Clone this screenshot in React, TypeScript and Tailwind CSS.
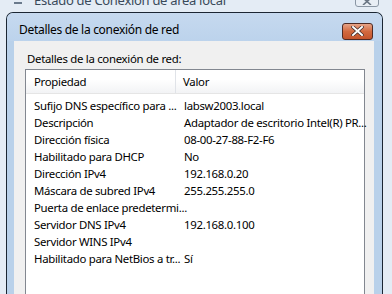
import React from "react";

const rows: [string, string][] = [
  ["Sufijo DNS específico para ...", "labsw2003.local"],
  ["Descripción", "Adaptador de escritorio Intel(R) PR..."],
  ["Dirección física", "08-00-27-88-F2-F6"],
  ["Habilitado para DHCP", "No"],
  ["Dirección IPv4", "192.168.0.20"],
  ["Máscara de subred IPv4", "255.255.255.0"],
  ["Puerta de enlace predetermi...", ""],
  ["Servidor DNS IPv4", "192.168.0.100"],
  ["Servidor WINS IPv4", ""],
  ["Habilitado para NetBios a tr...", "Sí"],
];

export default function App() {
  return (
    <div
      className="w-[392px] h-[294px] overflow-hidden flex flex-col bg-[#e4ecf5] text-[11.4px] tracking-[-0.3px] text-black"
      style={{ fontFamily: '"Noto Sans", "Liberation Sans", sans-serif' }}
    >
      {/* outer window title strip */}
      <div className="h-[12px] shrink-0 relative">
        <div className="absolute left-[14px] top-[-6px] w-[8px] h-[10px] border-b-2 border-[#6a7a8c]" />
        <div className="absolute left-[34px] top-[-7px] text-[#3a4a5a] text-[13px] leading-[15px] whitespace-nowrap">
          Estado de Conexión de área local
        </div>
        <div className="absolute left-[355px] top-[-10px] w-[24px] h-[17px] border border-[#8a96a4] rounded-[3px] bg-[#e8eef5] overflow-hidden flex justify-center">
          <svg width="10" height="14" viewBox="0 0 10 14">
            <path d="M1 7 L9 14 M9 7 L1 14" stroke="#6a7684" strokeWidth="1.6" />
          </svg>
        </div>
      </div>
      {/* dialog */}
      <div className="ml-[6px] w-[377px] flex-1 flex flex-col border border-b-0 border-[#1b2633] rounded-t-[7px] bg-[#b9d1ea]">
        <div className="h-[28px] shrink-0 flex items-center justify-between pl-[12px] pr-[9px] rounded-t-[6px] bg-gradient-to-b from-[#c6d9ef] to-[#bcd3ec]">
          <span className="text-[12px] leading-[15px] mt-[4px]">Detalles de la conexión de red</span>
          <div className="mt-[8px] w-[31px] h-[17px] rounded-[3px] border border-[#4f2a24] bg-gradient-to-b from-[#e6a387] via-[#d2693f] to-[#c4542c] flex items-center justify-center">
            <svg width="13" height="10" viewBox="0 0 13 10">
              <path d="M2 1 L11 9 M11 1 L2 9" stroke="#3b2a2a" strokeWidth="3.4" strokeLinecap="square" />
              <path d="M2 1 L11 9 M11 1 L2 9" stroke="#ffffff" strokeWidth="2" strokeLinecap="square" />
            </svg>
          </div>
        </div>
        <div className="ml-[7px] mr-[8px] flex-1 bg-[#f0f0f0] flex flex-col pl-[11px] pt-[10px]">
          <div className="pl-[2px] leading-[15px]">Detalles de la conexión de red:</div>
          <div className="mt-[3px] w-[340px] flex-1 border border-b-0 border-[#828790] bg-white flex flex-col">
            <div className="h-[23px] shrink-0 flex bg-gradient-to-b from-white from-40% to-[#f2f3f5]">
              <div className="w-[150px] shrink-0 pl-[8px] flex items-center border-r border-[#e0e3e8]">Propiedad</div>
              <div className="flex-1 pl-[7px] flex items-center">Valor</div>
            </div>
            <div className="h-px bg-[#e5e5e5]" />
            <div className="pt-[3px] flex flex-col">
              {rows.map(([k, v]) => (
                <div key={k} className="h-[17px] flex items-center">
                  <div className="w-[150px] shrink-0 pl-[8px] whitespace-nowrap">{k}</div>
                  <div className="flex-1 pl-[8px] whitespace-nowrap">{v}</div>
                </div>
              ))}
            </div>
          </div>
        </div>
      </div>
    </div>
  );
}
